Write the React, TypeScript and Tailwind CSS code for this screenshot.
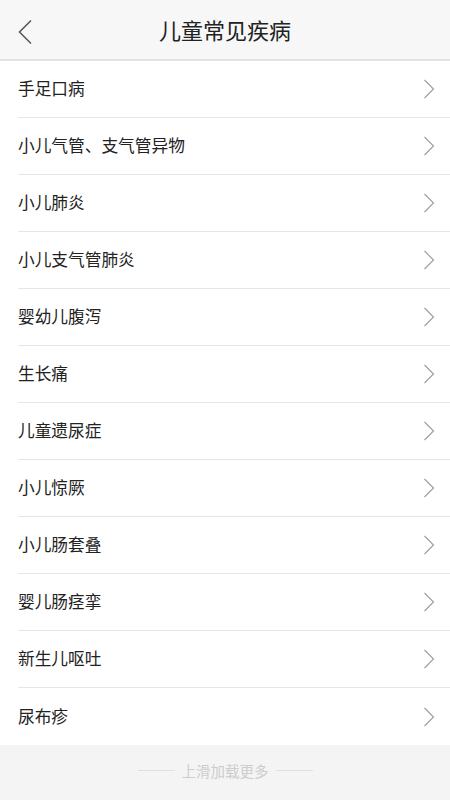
const items = [
  '手足口病',
  '小儿气管、支气管异物',
  '小儿肺炎',
  '小儿支气管肺炎',
  '婴幼儿腹泻',
  '生长痛',
  '儿童遗尿症',
  '小儿惊厥',
  '小儿肠套叠',
  '婴儿肠痉挛',
  '新生儿呕吐',
  '尿布疹',
]

function BackIcon() {
  return (
    <svg width="16" height="26" viewBox="0 0 16 26" fill="none">
      <path d="M14 1.5 L2.5 13 L14 24.5" stroke="#5a5a5a" strokeWidth="1.6" />
    </svg>
  )
}

function Arrow() {
  return (
    <svg width="12" height="20" viewBox="0 0 12 20" fill="none">
      <path d="M1.5 1 L10.5 10 L1.5 19" stroke="#a0a0a0" strokeWidth="1.2" />
    </svg>
  )
}

export default function App() {
  return (
    <div
      className="w-[450px] h-[800px] bg-[#f4f4f4] flex flex-col overflow-hidden"
      style={{ fontFamily: '"Noto Sans CJK SC", "Noto Sans", sans-serif' }}
    >
      <header className="relative h-[61px] shrink-0 bg-[#f7f7f7] border-b-2 border-[#e2e2e2] flex items-center justify-center">
        <button className="absolute left-[17px] top-[19px]">
          <BackIcon />
        </button>
        <h1 className="text-[22px] text-[#222] -mt-[1px]">儿童常见疾病</h1>
      </header>

      <ul className="bg-white">
        {items.map((name, i) => (
          <li key={name} className="pl-[18px]">
            <div
              className={`h-[57px] flex items-center justify-between pr-[15px] ${i < items.length - 1 ? 'border-b border-[#e6e6e6]' : ''}`}
            >
              <span className="text-[16.7px] text-[#222]">{name}</span>
              <Arrow />
            </div>
          </li>
        ))}
      </ul>

      <div className="flex items-center justify-center gap-[7px] mt-[15px]">
        <span className="w-[37px] h-px bg-[#e0e0e0]" />
        <span className="text-[14.5px] text-[#cdcdcd]">上滑加载更多</span>
        <span className="w-[37px] h-px bg-[#e0e0e0]" />
      </div>
    </div>
  )
}
